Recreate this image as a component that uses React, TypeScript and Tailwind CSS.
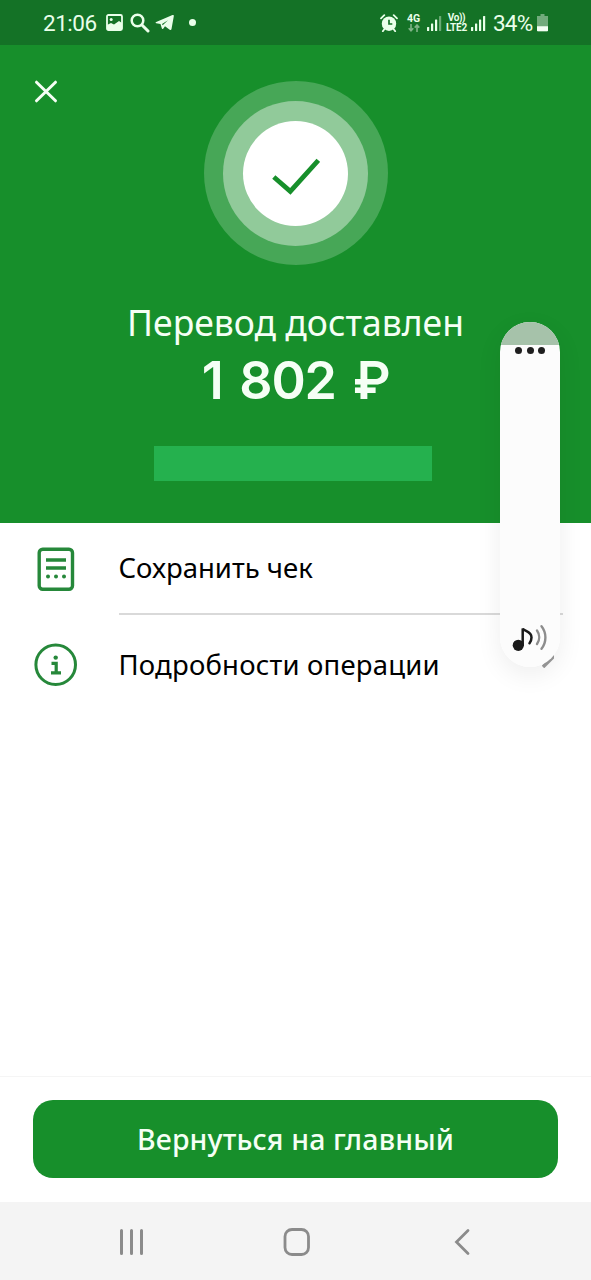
import type { ReactNode } from "react";

function SignalBars({ className, dim }: { className?: string; dim?: boolean }) {
  return (
    <svg className={className} width="15" height="18" viewBox="0 0 15 18" fill="#eaffea">
      <rect x="0" y="13" width="2.2" height="4" rx="0.5" />
      <rect x="4" y="9.5" width="2.2" height="7.5" rx="0.5" />
      <rect x="8" y="5.5" width="2.2" height="11.5" rx="0.5" />
      <rect x="12" y="2" width="2.2" height="15" rx="0.5" opacity={dim ? 0.4 : 1} />
    </svg>
  );
}

function StatusBar() {
  return (
    <div className="flex h-[45px] items-center justify-between bg-[#147226] pr-[43px] pl-[43px] font-['Roboto',sans-serif] text-[#eaffea]">
      <div className="flex items-center">
        <span className="w-[63px] pt-[2px] text-[22.5px] leading-none tracking-[-0.5px]">21:06</span>
        <svg width="17" height="17" viewBox="0 0 17 17">
          <rect x="1" y="1" width="15" height="15" rx="1.5" fill="none" stroke="#eaffea" strokeWidth="1.8" />
          <circle cx="5.2" cy="5.6" r="1.5" fill="#eaffea" />
          <path d="M1 15V11l4-2 3 1.5L13 7l3 2v6z" fill="#eaffea" />
        </svg>
        <svg className="ml-[7px]" width="20" height="20" viewBox="0 0 20 20" fill="none" stroke="#eaffea">
          <circle cx="7.5" cy="7.5" r="5.8" strokeWidth="2.5" />
          <path d="M12 12l6 6" strokeWidth="3" strokeLinecap="round" />
        </svg>
        <svg className="ml-[5px]" width="20" height="18" viewBox="0 0 20 18" fill="#eaffea">
          <path d="M1.200 8 17.500 1.100c.8-.3 1.500.1 1.300 1.100L16.500 15c-.2 1.100-1 1.300-1.800.8L10 12.300l-1.800 2.400c-.5.5-1.200.3-1.400-.4L5.500 10 1.200 9.200c-.8-.3-.8-.9 0-1.200z" />
          <path d="M7 10 13 6.200 7.700 11.200z" fill="#147226" />
        </svg>
        <span className="ml-[14px] size-[7px] rounded-full bg-[#eaffea]" />
      </div>

      <div className="flex items-center">
        <svg width="18" height="18" viewBox="0 0 18 18">
          <circle cx="9" cy="9.7" r="7.2" fill="#eaffea" />
          <path d="M1 4.300 4.300 1.200M17 4.300l-3.300-3.100M4.300 15.200l-1.500 2M13.700 15.200l1.500 2" stroke="#eaffea" strokeWidth="1.8" strokeLinecap="round" />
          <path d="M9 5.800v4.200h3.300" fill="none" stroke="#147226" strokeWidth="1.7" />
        </svg>
        <div className="ml-[8px] flex w-[15px] flex-col items-center">
          <span className="text-[10.5px] leading-[9px] font-bold">4G</span>
          <svg className="mt-[1px]" width="12" height="8" viewBox="0 0 12 8" fill="none" stroke="#7fb387" strokeWidth="1.6">
            <path d="M3 0v6.500M0.700 4.300 3 6.800l2.300-2.500M9 8V1.200M6.700 3.600 9 1.100l2.300 2.500" />
          </svg>
        </div>
        <SignalBars className="ml-[6px]" dim />
        <div className="ml-[3px] flex w-[23px] flex-col items-center text-[10px] leading-[9.5px] font-bold">
          <span className="tracking-[-0.4px]">Vo))</span>
          <span className="tracking-[-0.2px]">LTE2</span>
        </div>
        <SignalBars className="ml-[3px]" />
        <span className="ml-[7px] w-[44px] pt-[2px] text-[22.5px] leading-none tracking-[-0.8px]">34%</span>
        <svg width="11" height="18" viewBox="0 0 11 18">
          <path d="M3.500 0h4v2H11v14.500q0 .8-.8.800H.8q-.8 0-.8-.8V2h3.500z" fill="#72ab7c" />
          <path d="M0 12.300h11v4.200q0 .8-.8.800H.8q-.8 0-.8-.8z" fill="#f4fff4" />
        </svg>
      </div>
    </div>
  );
}

type ActionRowProps = {
  icon: ReactNode;
  label: string;
  labelClass?: string;
  children?: ReactNode;
};

function ActionRow({ icon, label, labelClass = "", children }: ActionRowProps) {
  return (
    <div className="flex h-[90px] items-center pl-[34px]">
      <div className="flex w-[84.5px] items-center">{icon}</div>
      <span className={`text-[27.5px] leading-none font-[450] whitespace-nowrap text-black ${labelClass}`}>{label}</span>
      {children}
    </div>
  );
}

function VolumeSlider() {
  return (
    <div className="absolute top-[322px] left-[500px] h-[345px] w-[60px] rounded-full shadow-[0_8px_26px_rgba(0,0,0,0.07)]">
      <div className="flex h-full flex-col items-center overflow-hidden rounded-full bg-[#fcfcfc]">
        <div className="h-[23px] w-full bg-[#a6c2aa]" />
        <div className="mt-[2px] flex gap-[4.5px]">
          <span className="size-[7px] rounded-full bg-[#1e1e1e]" />
          <span className="size-[7px] rounded-full bg-[#1e1e1e]" />
          <span className="size-[7px] rounded-full bg-[#1e1e1e]" />
        </div>
        <svg className="mt-auto mb-[13px]" width="38" height="30" viewBox="0 0 38 30" fill="none" strokeLinecap="round">
          <circle cx="7.3" cy="21.3" r="5.6" fill="#1a1a1a" />
          <path d="M11.700 21V4.500C13 7.500 20.500 7 20.500 13.500c0 2-.6 3.900-2 5.700" stroke="#1a1a1a" strokeWidth="2.5" />
          <path d="M26 6.500c2.900 4 2.900 9.500 0 13.500" stroke="#8d8d8d" strokeWidth="2.4" />
          <path d="M30.500 2.200c5.200 6.500 5.200 16 0 22.500" stroke="#8d8d8d" strokeWidth="2.4" />
        </svg>
      </div>
    </div>
  );
}

export default function App() {
  return (
    <div className="relative flex h-[1280px] w-[591px] flex-col overflow-hidden bg-white font-['Noto_Sans','Open_Sans',sans-serif]">
      <StatusBar />

      <section className="relative flex h-[478px] flex-col items-center bg-[#178f2b] text-[#f5fff5]">
        <button aria-label="Закрыть" className="absolute top-[35px] left-[34px]">
          <svg width="24" height="24" viewBox="0 0 24 24" stroke="#f5fff5" strokeWidth="3" strokeLinecap="round">
            <path d="M2.500 2.200 21.500 20.800M21.500 2.200 2.500 20.800" />
          </svg>
        </button>

        <div className="mt-[36px] flex size-[184px] items-center justify-center rounded-full bg-[#47a757]">
          <div className="flex size-[145px] items-center justify-center rounded-full bg-[#91ca9a]">
            <div className="flex size-[105px] items-center justify-center rounded-full bg-white pt-[7px]">
              <svg width="48" height="38" viewBox="0 0 48 38" fill="none" stroke="#178f2b" strokeWidth="4.8">
                <path d="M1.800 19 18.300 33.300 46.300 2.300" />
              </svg>
            </div>
          </div>
        </div>

        <h1 className="mt-[37px] text-[35.5px] leading-[40px] whitespace-nowrap">Перевод доставлен</h1>
        <p className="mt-[11px] font-['Inter',sans-serif] text-[52px] leading-[56px] font-semibold tracking-[-1.2px] [word-spacing:5px] whitespace-nowrap">
          1 802 ₽
        </p>
        <div className="mt-[37px] mr-[5px] h-[35px] w-[278px] bg-[#25b14e]" />
      </section>

      <main className="flex-1">
        <ActionRow
          label="Сохранить чек"
          icon={
            <svg className="mt-[2px]" width="44" height="44" viewBox="0 0 44 44" fill="none" stroke="#26883a" strokeWidth="3.4">
              <rect x="5.2" y="2.3" width="33.3" height="40" rx="3.5" />
              <path d="M12 13h20M12 21h20" />
              <path d="M14 29.500h.01M22 29.500h.01M30 29.500h.01" strokeWidth="4" strokeLinecap="round" />
            </svg>
          }
        />
        <div className="ml-[119px] h-[1.5px] w-[444px] bg-[#d9d9d9]" />
        <div className="pt-[5px]">
          <ActionRow
            label="Подробности операции"
            labelClass="tracking-[0.2px]"
            icon={
              <svg width="44" height="44" viewBox="0 0 44 44" fill="none" stroke="#26883a" strokeWidth="3">
                <circle cx="21.7" cy="21.7" r="19.8" />
                <circle cx="21.7" cy="14.6" r="2.2" fill="#26883a" stroke="none" />
                <path d="M17.500 20.300h4.700v9.500M17 29.800h10" strokeWidth="3.2" />
              </svg>
            }
          >
            <svg className="mt-[-16px] mr-[37px] ml-auto shrink-0" width="12" height="22" viewBox="0 0 12 22" fill="none" stroke="#9a9a9a" strokeWidth="3.5">
              <path d="M1 1l10 10L1 21" />
            </svg>
          </ActionRow>
        </div>
      </main>

      <footer className="border-t border-[#f5f5f5] px-[33px] pt-[23px] pb-[24px]">
        <button className="h-[78px] w-[525px] rounded-[20px] bg-[#178f2b] text-[28.5px] font-[480] tracking-[0.15px] whitespace-nowrap text-[#f5fff5]">
          Вернуться на главный
        </button>
      </footer>

      <nav className="flex h-[78px] items-center bg-[#f4f4f4] pt-[1px] pl-[119px]">
        <svg width="26" height="28" viewBox="0 0 26 28" stroke="#8b8b8b" strokeWidth="3" strokeLinecap="round">
          <path d="M2.500 2.500v23M12.500 2.500v23M22.500 2.500v23" />
        </svg>
        <svg className="ml-[138px]" width="28" height="30" viewBox="0 0 28 30" fill="none" stroke="#8b8b8b" strokeWidth="2.8">
          <rect x="2" y="2.5" width="23.5" height="25" rx="7" />
        </svg>
        <svg className="ml-[143px]" width="17" height="28" viewBox="0 0 17 28" fill="none" stroke="#8b8b8b" strokeWidth="2.8" strokeLinecap="round">
          <path d="M14 2.500 2.500 14 14 25.500" />
        </svg>
      </nav>

      <VolumeSlider />
    </div>
  );
}
